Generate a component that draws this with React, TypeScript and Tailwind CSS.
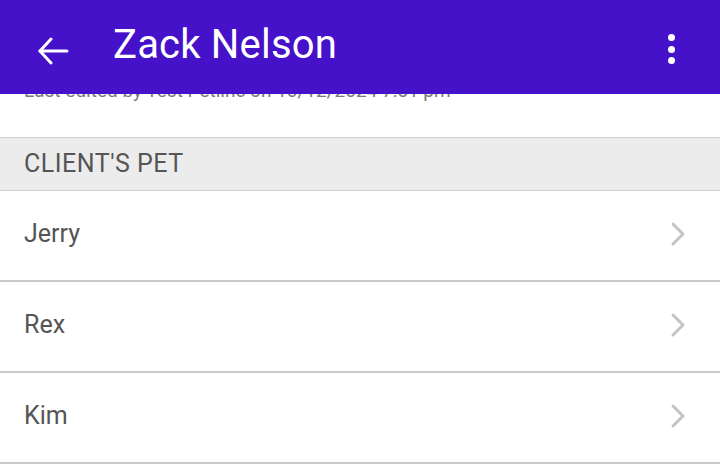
import { ChevronRight } from 'lucide-react';

const pets = ['Jerry', 'Rex', 'Kim'];

export default function App() {
  return (
    <div className="relative h-[472px] w-[720px] overflow-hidden bg-white font-['Roboto',sans-serif]">
      {/* App bar */}
      <header className="absolute inset-x-0 top-0 z-10 flex h-[94px] items-center bg-[#4511c9] text-white">
        <button className="ml-[34px] flex h-[38px] w-[38px] items-center justify-center pt-[8px]">
          <svg width="32" height="28" viewBox="0 0 32 28" fill="none" stroke="white" strokeWidth="3" strokeLinecap="round" strokeLinejoin="round">
            <path d="M30 14H3" />
            <path d="M14 2L3 14l11 12" />
          </svg>
        </button>
        <h1 className="ml-[41px] pb-[4px] text-[40px] leading-none tracking-[0.2px]">Zack Nelson</h1>
        <div className="ml-auto mr-[45px] flex flex-col gap-[4.5px] pt-[4px]">
          <span className="h-[7px] w-[7px] rounded-full bg-white" />
          <span className="h-[7px] w-[7px] rounded-full bg-white" />
          <span className="h-[7px] w-[7px] rounded-full bg-white" />
        </div>
      </header>

      <main className="pt-[79px]">
        <div className="h-[58px] px-[24px]">
          <p className="text-[19px] leading-[24px] text-[#7a7a7a]">Last edited by Test Petlinc on 10/12/2024 7:51 pm</p>
        </div>

        <div className="flex h-[54px] items-center border-y border-[#cfcfcf] bg-[#ececec] px-[24px]">
          <span className="text-[25px] tracking-[0.5px] text-[#555555]">CLIENT'S PET</span>
        </div>

        {pets.map((name) => (
          <div key={name} className="flex h-[91px] items-center border-b-2 border-[#cacaca] pb-[3px] pl-[24px] pr-[22px]">
            <span className="text-[25px] text-[#555555]">{name}</span>
            <ChevronRight className="ml-auto h-[40px] w-[40px] text-[#c4c4c4]" strokeWidth={1.8} />
          </div>
        ))}
      </main>
    </div>
  );
}
